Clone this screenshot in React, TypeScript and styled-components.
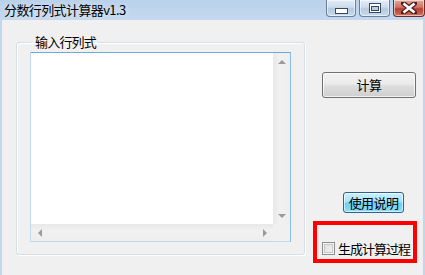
import styled, { createGlobalStyle } from 'styled-components';

const GlobalStyle = createGlobalStyle`
  html, body {
    margin: 0;
    padding: 0;
    width: 425px;
    height: 275px;
    overflow: hidden;
    background: #f0f0f0;
    font-family: "Noto Sans CJK SC", "Liberation Sans", sans-serif;
  }
`;

const Window = styled.div`
  width: 425px;
  height: 275px;
  display: flex;
  flex-direction: column;
  background: #c2d7ed;
  box-sizing: border-box;
  padding: 0 2px 0 2px;
`;

const TitleBar = styled.div`
  height: 20px;
  margin: 0 -2px;
  display: flex;
  align-items: flex-start;
  background: linear-gradient(to bottom, #b9d1ea 0%, #c4d9ef 100%);
`;

const Title = styled.span`
  font-size: 13px;
  line-height: 20px;
  color: #000;
  padding-left: 4px;
  flex: 1;
  letter-spacing: -0.6px;
  text-shadow: 0 0 6px rgba(255, 255, 255, 0.7);
`;

const CaptionGroup = styled.div`
  display: flex;
  gap: 3px;
`;

const CaptionButton = styled.div<{ $close?: boolean; $w: number }>`
  width: ${(p) => p.$w}px;
  height: 17px;
  box-sizing: border-box;
  border: 1px solid ${(p) => (p.$close ? '#6b2d2d' : '#6e7f96')};
  border-top: none;
  border-radius: 0 0 4px 4px;
  background: ${(p) =>
    p.$close
      ? 'linear-gradient(to bottom, #e3a99c 0%, #cf7263 45%, #b8402f 55%, #d1705a 100%)'
      : 'linear-gradient(to bottom, #e3edf7 0%, #cddbeb 45%, #b3c9e2 55%, #c8dbef 100%)'};
  box-shadow: inset 0 0 0 1px rgba(255, 255, 255, 0.55);
  display: flex;
  align-items: center;
  justify-content: center;
`;

const Client = styled.div`
  flex: 1;
  background: #f0f0f0;
  display: flex;
  padding: 15px 0 0 14px;
`;

const GroupBox = styled.fieldset`
  margin: 0;
  width: 289px;
  height: 220px;
  box-sizing: border-box;
  border: 1px solid #d5dfe5;
  border-radius: 3px;
  box-shadow: inset 1px 1px 0 #fff, 1px 1px 0 #fff;
  padding: 3px 13px 11px 13px;
`;

const Legend = styled.legend`
  font-size: 13px;
  line-height: 14px;
  letter-spacing: -0.8px;
  padding: 0 2px 0 3px;
  margin-left: 2px;
  color: #000;
`;

const TextBox = styled.div`
  width: 261px;
  height: 190px;
  box-sizing: border-box;
  border: 1px solid #c3d9ee;
  border-top-color: #70a8db;
  border-right-color: #87bde6;
  background: #fff;
  display: grid;
  grid-template-columns: 1fr 17px;
  grid-template-rows: 1fr 17px;
`;

const Editor = styled.div`
  background: #fff;
`;

const ScrollBar = styled.div<{ $vertical?: boolean }>`
  background: ${(p) =>
    p.$vertical
      ? 'linear-gradient(to right, #e8e8e8, #f1f1f1 40%, #eeeeee)'
      : 'linear-gradient(to bottom, #e8e8e8, #f1f1f1 40%, #eeeeee)'};
  display: flex;
  flex-direction: ${(p) => (p.$vertical ? 'column' : 'row')};
  justify-content: space-between;
  align-items: center;
`;

const ArrowCell = styled.div`
  width: 17px;
  height: 17px;
  display: flex;
  align-items: center;
  justify-content: center;
`;

const Arrow = styled.div<{ $dir: 'up' | 'down' | 'left' | 'right' }>`
  width: 0;
  height: 0;
  ${(p) =>
    p.$dir === 'up'
      ? 'border-left: 4px solid transparent; border-right: 4px solid transparent; border-bottom: 4px solid #9a9a9a;'
      : p.$dir === 'down'
      ? 'border-left: 4px solid transparent; border-right: 4px solid transparent; border-top: 4px solid #9a9a9a;'
      : p.$dir === 'left'
      ? 'border-top: 4px solid transparent; border-bottom: 4px solid transparent; border-right: 4px solid #9a9a9a;'
      : 'border-top: 4px solid transparent; border-bottom: 4px solid transparent; border-left: 4px solid #9a9a9a;'}
`;

const Corner = styled.div`
  background: #f0f0f0;
`;

const SideColumn = styled.div`
  width: 104px;
  margin-left: 8px;
  display: flex;
  flex-direction: column;
`;

const Button = styled.button<{ $focused?: boolean; $w: number; $h: number; $left: number; $top: number }>`
  width: ${(p) => p.$w}px;
  height: ${(p) => p.$h}px;
  margin-left: ${(p) => p.$left}px;
  margin-top: ${(p) => p.$top}px;
  padding: 0;
  box-sizing: border-box;
  border-radius: 3px;
  font-family: "Noto Sans CJK SC", "Liberation Sans", sans-serif;
  font-size: 13px;
  line-height: 14px;
  letter-spacing: -0.6px;
  color: #000;
  border: 1px solid ${(p) => (p.$focused ? '#2c628b' : '#707070')};
  background: ${(p) =>
    p.$focused
      ? 'linear-gradient(to bottom, #cdf0ff 0%, #a2e2fb 45%, #6ccff5 55%, #8fdcf8 100%)'
      : 'linear-gradient(to bottom, #f2f2f2 0%, #ebebeb 45%, #dddddd 55%, #cfcfcf 100%)'};
  box-shadow: inset 0 0 0 1px ${(p) => (p.$focused ? 'rgba(255,255,255,0.6)' : 'rgba(255,255,255,0.7)')};
`;

const Highlight = styled.div`
  margin-top: 8px;
  height: 42px;
  box-sizing: border-box;
  border: 4px solid #ff0000;
  padding: 13px 0 0 5px;
  display: flex;
  align-items: center;
  gap: 3px;
`;

const CheckBox = styled.div`
  width: 13px;
  height: 13px;
  box-sizing: border-box;
  border: 1px solid #8f8f8f;
  background: linear-gradient(135deg, #dcdcdc, #f6f6f6);
  box-shadow: inset 0 0 0 1px #f4f4f4, inset 0 0 0 2px #c8c8c8;
`;

const CheckLabel = styled.span`
  font-size: 13px;
  line-height: 16px;
  letter-spacing: -1px;
  color: #000;
`;

export default function App() {
  return (
    <>
      <GlobalStyle />
      <Window>
        <TitleBar>
          <Title>分数行列式计算器v1.3</Title>
          <CaptionGroup>
            <CaptionButton $w={30}>
              <svg width="13" height="6" viewBox="0 0 13 6" style={{ marginTop: 6 }}>
                <rect x="0.5" y="0.5" width="12" height="5" fill="#fff" stroke="#3b4a5e" />
              </svg>
            </CaptionButton>
            <CaptionButton $w={31}>
              <svg width="12" height="10" viewBox="0 0 12 10">
                <rect x="0.5" y="0.5" width="11" height="9" fill="#fff" stroke="#3b4a5e" />
                <rect x="2.5" y="3.5" width="7" height="4" fill="#b7cde6" stroke="#3b4a5e" />
              </svg>
            </CaptionButton>
            <CaptionButton $w={32} $close>
              <svg width="16" height="12" viewBox="0 0 16 12">
                <path d="M2 1 L14 11 M14 1 L2 11" stroke="#4a2020" strokeWidth="5" strokeLinecap="square" />
                <path d="M2.5 1.5 L13.5 10.5 M13.5 1.5 L2.5 10.5" stroke="#fff" strokeWidth="2.6" />
              </svg>
            </CaptionButton>
          </CaptionGroup>
        </TitleBar>
        <Client>
          <GroupBox>
            <Legend>输入行列式</Legend>
            <TextBox>
              <Editor />
              <ScrollBar $vertical>
                <ArrowCell><Arrow $dir="up" /></ArrowCell>
                <ArrowCell><Arrow $dir="down" /></ArrowCell>
              </ScrollBar>
              <ScrollBar>
                <ArrowCell><Arrow $dir="left" /></ArrowCell>
                <ArrowCell><Arrow $dir="right" /></ArrowCell>
              </ScrollBar>
              <Corner />
            </TextBox>
          </GroupBox>
          <SideColumn>
            <Button $w={94} $h={26} $left={9} $top={37}>计算</Button>
            <Button $w={61} $h={21} $left={30} $top={94} $focused>使用说明</Button>
            <Highlight>
              <CheckBox />
              <CheckLabel>生成计算过程</CheckLabel>
            </Highlight>
          </SideColumn>
        </Client>
      </Window>
    </>
  );
}
